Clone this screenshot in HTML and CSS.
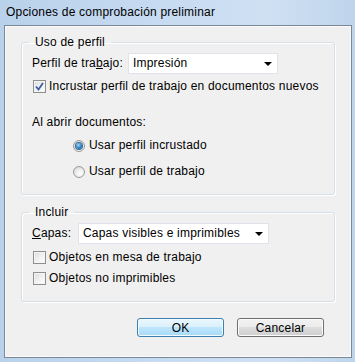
FILE: index.html
```html
<!DOCTYPE html>
<html lang="es">
<head>
  <meta charset="UTF-8">
  <title>Opciones de comprobación preliminar</title>
  <link rel="stylesheet" href="styles.css">
</head>
<body>
  <div class="window">
    <div class="titlebar">Opciones de comprobación preliminar</div>

    <div class="client">
      <fieldset class="group group-profile">
        <legend>Uso de perfil</legend>

        <div class="row row-combo">
          <span class="field-label">Perfil de tra<u>b</u>ajo:</span>
          <div class="combo combo-profile">
            <span>Impresión</span>
            <i class="arrow"></i>
          </div>
        </div>

        <div class="row row-check first-check">
          <span class="check checked">
            <svg width="9" height="9" viewBox="0 0 9 9"><path d="M1 4.5 L3.5 7.5 L8 1" fill="none" stroke="#3b5ea3" stroke-width="1.8"/></svg>
          </span>
          <span>Incrustar perfil de trabajo en documentos nuevos</span>
        </div>

        <div class="row open-label">Al abrir documentos:</div>

        <div class="row row-radio radio-first">
          <span class="radio checked"><i></i></span>
          <span>Usar perfil incrustado</span>
        </div>
        <div class="row row-radio radio-second">
          <span class="radio"></span>
          <span>Usar perfil de trabajo</span>
        </div>
      </fieldset>

      <fieldset class="group group-include">
        <legend>Incluir</legend>

        <div class="row row-combo">
          <span class="field-label"><u>C</u>apas:</span>
          <div class="combo combo-layers">
            <span>Capas visibles e imprimibles</span>
            <i class="arrow"></i>
          </div>
        </div>

        <div class="row row-check first-check">
          <span class="check"></span>
          <span>Objetos en mesa de trabajo</span>
        </div>
        <div class="row row-check">
          <span class="check"></span>
          <span>Objetos no imprimibles</span>
        </div>
      </fieldset>

      <div class="buttons">
        <button class="btn btn-default">OK</button>
        <button class="btn">Cancelar</button>
      </div>
    </div>
  </div>
</body>
</html>
```

FILE: styles.css
```css
html, body {
  margin: 0;
  padding: 0;
}
body {
  width: 355px;
  height: 362px;
  overflow: hidden;
  font-family: "Liberation Sans", Arial, sans-serif;
  font-size: 12px;
  letter-spacing: 0.2px;
  color: #000;
}
.window {
  height: 362px;
  box-sizing: border-box;
  padding: 0 3px 4px 4px;
  background: linear-gradient(to right, #b9d1ea 0%, #c5daf1 40%, #cfe0f3 75%, #bfd5ec 100%);
  display: flex;
  flex-direction: column;
}
.titlebar {
  height: 25px;
  line-height: 24px;
  padding-left: 2px;
  color: #000;
}
.client {
  flex: 1;
  background: #f0f0f0;
  border: 1px solid #7b8895;
  box-shadow: inset 0 0 0 1px #fafafa;
  padding: 0 16px;
  display: flex;
  flex-direction: column;
}

/* group boxes */
.group {
  margin: 9px 0 0 0;
  padding: 3px 10px 15px 10px;
  border: 1px solid #d5dfe5;
  border-radius: 3px;
  box-shadow: inset 1px 1px 0 #fff, 1px 1px 0 #fff;
  min-width: 0;
}
.group legend {
  margin-left: -3px;
  padding: 0 6px;
  line-height: 15px;
  color: #000;
}
.group-include {
  margin-top: 10px;
}

.row {
  display: flex;
  align-items: center;
  height: 15px;
  line-height: 15px;
  white-space: nowrap;
}
.row-combo {
  height: 21px;
}
.field-label {
  width: 96px;
}
.group-include .field-label {
  width: 46px;
}
.first-check {
  margin-top: 5px;
}
.group-include .row-check {
  margin-top: 6px;
}
.open-label {
  margin-top: 21px;
}
.row-radio {
  padding-left: 41px;
}
.radio-first {
  margin-top: 8px;
}
.radio-second {
  margin-top: 11px;
}

/* combo boxes */
.combo {
  height: 21px;
  box-sizing: border-box;
  background: #fff;
  border: 1px solid #e2e3ea;
  display: flex;
  align-items: center;
  justify-content: space-between;
  padding: 0 5px 0 4px;
}
.combo-profile {
  width: 150px;
}
.combo-layers {
  width: 191px;
}
.arrow {
  width: 0;
  height: 0;
  border-left: 4px solid transparent;
  border-right: 4px solid transparent;
  border-top: 4px solid #000;
  margin-top: 1px;
}

/* check boxes */
.check {
  width: 13px;
  height: 13px;
  box-sizing: border-box;
  border: 1px solid #8e8f8f;
  background: linear-gradient(135deg, #dcdcdc 0%, #f4f4f4 60%, #ffffff 100%);
  box-shadow: inset 0 0 0 1px #f4f4f4;
  margin: 0 3px 0 1px;
  display: flex;
  align-items: center;
  justify-content: center;
}

/* radio buttons */
.radio {
  width: 12px;
  height: 12px;
  box-sizing: border-box;
  border-radius: 50%;
  border: 1px solid #9b9b9b;
  background: radial-gradient(circle at 60% 65%, #ffffff 0%, #eaeaea 50%, #cfcfcf 100%);
  margin: 0 4px 0 0;
  display: flex;
  align-items: center;
  justify-content: center;
}
.radio i {
  width: 6px;
  height: 6px;
  border-radius: 50%;
  background: radial-gradient(circle at 40% 35%, #a8dcf8 0%, #2a7ec0 55%, #0e4e8a 100%);
  box-shadow: 0 0 0 1px #3a6a97;
}

/* buttons */
.buttons {
  display: flex;
  justify-content: flex-end;
  gap: 13px;
  margin-top: 16px;
  padding-right: 11px;
}
.btn {
  width: 87px;
  height: 19px;
  box-sizing: border-box;
  font-family: inherit;
  font-size: 12px;
  letter-spacing: inherit;
  padding: 0;
  color: #000;
  border: 1px solid #707070;
  border-radius: 3px;
  background: linear-gradient(to bottom, #f2f2f2 0%, #ebebeb 50%, #dddddd 50%, #cfcfcf 100%);
  box-shadow: inset 0 0 0 1px #fcfcfc;
}
.btn-default {
  border-color: #3c7fb1;
  background: linear-gradient(to bottom, #eaf6fd 0%, #d9f0fc 50%, #bee6fd 50%, #a7d9f5 100%);
  box-shadow: inset 0 0 0 1px #f4fbfe;
}
```
